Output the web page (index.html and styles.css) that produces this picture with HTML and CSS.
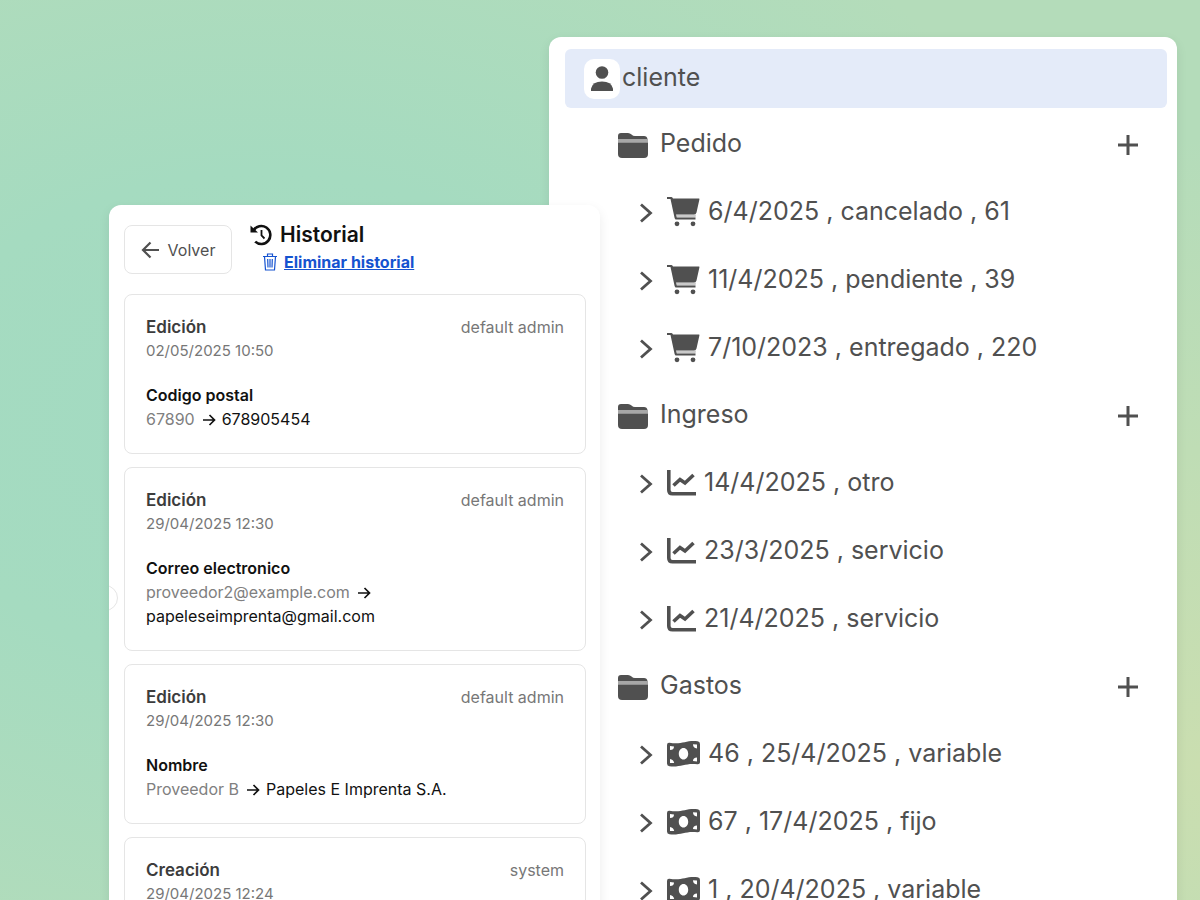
FILE: index.html
```html
<!DOCTYPE html>
<html lang="es">
<head>
    <meta charset="UTF-8">
    <meta name="viewport" content="width=device-width, initial-scale=1.0">
    <title>Historial</title>
    <link rel="stylesheet" href="styles.css">
</head>
<body>

    <!-- shared icons -->
    <svg class="sprite" aria-hidden="true">
        <symbol id="folder" viewBox="0 0 30 26">
            <path d="M0 7V4Q0 1 3 1H10Q12 1 13.500 2.500T17 4H26Q29 4 29.500 7Z"/>
            <path d="M0 7H30V10.500H0Z" opacity=".5"/>
            <path d="M0 10.500H30V22Q30 26 26 26H4Q0 26 0 22Z"/>
        </symbol>
        <symbol id="plus" viewBox="0 0 22 22">
            <path d="M11 1V21M1 11H21" fill="none" stroke="currentColor" stroke-width="3"/>
        </symbol>
        <symbol id="chevron" viewBox="0 0 14 20">
            <path d="M2 1.500L11.500 10L2 18.500" fill="none" stroke="currentColor" stroke-width="2.800"/>
        </symbol>
        <symbol id="cart" viewBox="0 0 33 30">
            <path d="M0 0H4.500Q5.500 0 6 1.500H32Q32.600 1.500 32.400 2.500L29.500 15.500Q29 17.500 27 17.500H9L9.800 20.500H28.500V22.500H9Q8 22.500 7.600 21L3.500 2H0Z"/>
            <path d="M9 17.500H29L28.500 20.500H9.800Z" opacity=".3"/>
            <circle cx="10" cy="26.800" r="2.400"/>
            <circle cx="26" cy="26.800" r="2.400"/>
        </symbol>
        <symbol id="chart" viewBox="0 0 29 26">
            <path d="M1.800 0V20Q1.800 23.800 5.500 23.800H29" fill="none" stroke="currentColor" stroke-width="3.600"/>
            <path d="M6.500 15.500L13 9.500L18 13L26.500 5" fill="none" stroke="currentColor" stroke-width="3.600"/>
        </symbol>
        <symbol id="money" viewBox="0 0 33 26">
            <path fill-rule="evenodd" d="M0 4Q0 1.500 2.500 1.800C15 4 19 -1 30.500 .3Q33 .6 33 3V21Q33 23.500 30.500 23.300C19 21.500 14 26.500 2.500 25.200Q0 25 0 22.500ZM16.500 7C13.800 7 11.800 9.600 11.800 12.800S13.800 18.600 16.500 18.600S21.200 16 21.200 12.800S19.200 7 16.500 7ZM3 5V9Q7 9 7 5.500ZM3 18V22L7.200 22Q6.500 18.500 3 18ZM30 3.500L26 3.300Q26 7 30 7.500ZM30 16.500Q26 16.500 26 20L30 20.500Z"/>
        </symbol>
        <symbol id="arrow" viewBox="0 0 14 14">
            <path d="M1 7H12.500M7.500 2L12.500 7L7.500 12" fill="none" stroke="currentColor" stroke-width="1.700"/>
        </symbol>
    </svg>

    <main class="stage">
        <section class="panel tree">
            <div class="tree-root">
                <span class="avatar">
                    <svg width="22" height="26" viewBox="0 0 22 26"><circle cx="11" cy="6.500" r="6.300"/><path d="M0 25V22.500Q1.500 15.500 11 15.500T22 22.500V25Z"/></svg>
                </span>
                <span class="label">cliente</span>
            </div>

            <div class="group">
                <div class="folder">
                    <svg class="icon-folder"><use href="#folder"/></svg>
                    <span class="label">Pedido</span>
                    <button class="add" aria-label="Agregar pedido"><svg><use href="#plus"/></svg></button>
                </div>
                <ul>
                    <li><button class="toggle" aria-label="Abrir"><svg><use href="#chevron"/></svg></button><svg class="icon-cart"><use href="#cart"/></svg><span class="label">6/4/2025 , cancelado , 61</span></li>
                    <li><button class="toggle" aria-label="Abrir"><svg><use href="#chevron"/></svg></button><svg class="icon-cart"><use href="#cart"/></svg><span class="label">11/4/2025 , pendiente , 39</span></li>
                    <li><button class="toggle" aria-label="Abrir"><svg><use href="#chevron"/></svg></button><svg class="icon-cart"><use href="#cart"/></svg><span class="label">7/10/2023 , entregado , 220</span></li>
                </ul>
            </div>

            <div class="group">
                <div class="folder">
                    <svg class="icon-folder"><use href="#folder"/></svg>
                    <span class="label">Ingreso</span>
                    <button class="add" aria-label="Agregar ingreso"><svg><use href="#plus"/></svg></button>
                </div>
                <ul>
                    <li><button class="toggle" aria-label="Abrir"><svg><use href="#chevron"/></svg></button><svg class="icon-chart"><use href="#chart"/></svg><span class="label">14/4/2025 , otro</span></li>
                    <li><button class="toggle" aria-label="Abrir"><svg><use href="#chevron"/></svg></button><svg class="icon-chart"><use href="#chart"/></svg><span class="label">23/3/2025 , servicio</span></li>
                    <li><button class="toggle" aria-label="Abrir"><svg><use href="#chevron"/></svg></button><svg class="icon-chart"><use href="#chart"/></svg><span class="label">21/4/2025 , servicio</span></li>
                </ul>
            </div>

            <div class="group">
                <div class="folder">
                    <svg class="icon-folder"><use href="#folder"/></svg>
                    <span class="label">Gastos</span>
                    <button class="add" aria-label="Agregar gasto"><svg><use href="#plus"/></svg></button>
                </div>
                <ul>
                    <li><button class="toggle" aria-label="Abrir"><svg><use href="#chevron"/></svg></button><svg class="icon-money"><use href="#money"/></svg><span class="label">46 , 25/4/2025 , variable</span></li>
                    <li><button class="toggle" aria-label="Abrir"><svg><use href="#chevron"/></svg></button><svg class="icon-money"><use href="#money"/></svg><span class="label">67 , 17/4/2025 , fijo</span></li>
                    <li><button class="toggle" aria-label="Abrir"><svg><use href="#chevron"/></svg></button><svg class="icon-money"><use href="#money"/></svg><span class="label">1 , 20/4/2025 , variable</span></li>
                </ul>
            </div>
        </section>

        <section class="panel history">
            <span class="handle"></span>
            <header>
                <button class="back">
                    <svg width="19" height="18" viewBox="0 0 19 18"><path d="M18 9H2M9.500 1.500L2 9L9.500 16.500" fill="none" stroke="currentColor" stroke-width="2.200"/></svg>
                    Volver
                </button>
                <div>
                    <h1>
                        <svg width="22" height="22" viewBox="0 0 22 22"><path d="M3.500 6.500A9 9 0 1 1 5.200 17.600" fill="none" stroke="currentColor" stroke-width="2.600"/><path d="M.5 1.500V8.500H8Z"/><path d="M11.500 6V11.500L14.500 14.500" fill="none" stroke="currentColor" stroke-width="1.800"/></svg>
                        Historial
                    </h1>
                    <a class="delete" href="#">
                        <svg width="14" height="18" viewBox="0 0 14 18"><path d="M0 3.500H14M4.500 3.500V1H9.500V3.500M1.500 3.500L2.500 17H11.500L12.500 3.500M4.700 6L5 14.500M7 6V14.500M9.300 6L9 14.500" fill="none" stroke="currentColor" stroke-width="1.200"/></svg>
                        <span>Eliminar historial</span>
                    </a>
                </div>
            </header>

            <article class="entry">
                <div class="entry-head"><h2>Edición</h2><span class="user">default admin</span></div>
                <time>02/05/2025 10:50</time>
                <h3>Codigo postal</h3>
                <p><span class="old">67890</span> <svg class="arrow"><use href="#arrow"/></svg> 678905454</p>
            </article>

            <article class="entry">
                <div class="entry-head"><h2>Edición</h2><span class="user">default admin</span></div>
                <time>29/04/2025 12:30</time>
                <h3>Correo electronico</h3>
                <p><span class="old">proveedor2@example.com</span> <svg class="arrow"><use href="#arrow"/></svg> papeleseimprenta@gmail.com</p>
            </article>

            <article class="entry">
                <div class="entry-head"><h2>Edición</h2><span class="user">default admin</span></div>
                <time>29/04/2025 12:30</time>
                <h3>Nombre</h3>
                <p><span class="old">Proveedor B</span> <svg class="arrow"><use href="#arrow"/></svg> Papeles E Imprenta S.A.</p>
            </article>

            <article class="entry">
                <div class="entry-head"><h2>Creación</h2><span class="user">system</span></div>
                <time>29/04/2025 12:24</time>
            </article>
        </section>
    </main>

</body>
</html>
```
FILE: styles.css
```css
* {
    box-sizing: border-box;
}

body {
    margin: 0;
    font-family: "Inter", sans-serif;
    color: #111;
}

h1, h2, h3, p, ul {
    margin: 0;
    padding: 0;
}

button {
    font: inherit;
    color: inherit;
    background: none;
    border: none;
    padding: 0;
    cursor: pointer;
}

svg {
    display: block;
    flex: none;
    fill: currentColor;
}

.sprite {
    display: none;
}

/* the two panels share the third column, the history lies on top */
.stage {
    display: grid;
    grid-template-columns: 109fr 440fr 51fr 577fr 23fr;
    height: 100vh;
    overflow: hidden;
    background:
        radial-gradient(ellipse 45% 70% at 100% 85%, #cadeb0 0%, rgba(202, 222, 176, 0) 100%),
        radial-gradient(ellipse 85% 80% at 22% 47%, #a2dac2 0%, #a5dbc0 35%, #b4dcba 85%, #b4dcba 100%);
}

.panel {
    grid-row: 1;
    background: #fff;
    border-radius: 12px 12px 0 0;
    box-shadow: 0 4px 12px rgba(0, 0, 0, 0.08);
}

/* tree */
.tree {
    grid-column: 3 / 5;
    margin-top: 37px;
    padding: 12px 10px 0 16px;
    color: #505050;
    font-size: 25px;
}

.tree .label {
    padding-bottom: 3px;
    white-space: nowrap;
}

.tree-root {
    display: flex;
    align-items: center;
    gap: 2px;
    height: 59px;
    margin-bottom: 3px;
    padding-left: 19px;
    background: #e4ebf9;
    border-radius: 6px;
}

.avatar {
    display: flex;
    align-items: center;
    justify-content: center;
    width: 36px;
    height: 40px;
    background: #fff;
    border-radius: 10px;
}

.folder {
    display: flex;
    align-items: center;
    gap: 12px;
    height: 67px;
    padding: 0 28px 0 53px;
}

.icon-folder {
    width: 30px;
    height: 26px;
}

.add {
    margin-left: auto;
}

.add svg {
    width: 22px;
    height: 22px;
}

.group li {
    display: flex;
    align-items: center;
    gap: 8px;
    height: 68px;
    padding-left: 74px;
}

.toggle {
    margin-right: 6px;
    padding-top: 2px;
}

.toggle svg {
    width: 14px;
    height: 20px;
}

.icon-cart {
    width: 33px;
    height: 30px;
}

.icon-chart {
    width: 29px;
    height: 26px;
}

.icon-money {
    width: 33px;
    height: 26px;
}

/* history */
.history {
    position: relative;
    grid-column: 2 / 4;
    display: flex;
    flex-direction: column;
    gap: 13px;
    margin-top: 205px;
    padding: 20px 14px 0 15px;
    overflow: hidden;
}

.handle {
    position: absolute;
    top: 380px;
    left: -17px;
    width: 26px;
    height: 26px;
    border: 1px solid #e5e5e5;
    border-radius: 50%;
}

.history header {
    display: flex;
    align-items: center;
    gap: 18px;
    height: 49px;
    margin-bottom: 7px;
}

.back {
    display: flex;
    align-items: center;
    justify-content: center;
    gap: 8px;
    width: 108px;
    height: 49px;
    font-size: 16px;
    color: #505050;
    border: 1px solid #e5e5e5;
    border-radius: 8px;
}

h1 {
    display: flex;
    align-items: center;
    gap: 8px;
    font-size: 21px;
    font-weight: 600;
    line-height: 28px;
}

.delete {
    display: flex;
    align-items: center;
    gap: 7px;
    padding: 0 0 4px 13px;
    font-size: 16px;
    font-weight: 700;
    line-height: 26px;
    color: #1553d0;
}

.entry {
    flex: none;
    padding: 20px 21px 22px;
    border: 1px solid #e5e5e5;
    border-radius: 8px;
    font-size: 16px;
    line-height: 24px;
}

.entry-head {
    display: flex;
    justify-content: space-between;
}

h2 {
    font-size: 17px;
    font-weight: 600;
    color: #3c3c3c;
}

.user {
    font-size: 16px;
    color: #777;
}

time {
    display: block;
    font-size: 15px;
    color: #777;
}

h3 {
    margin-top: 20px;
    font-size: 16px;
    font-weight: 600;
}

.entry p {
    max-width: 320px;
}

.old {
    color: #808080;
}

.arrow {
    display: inline-block;
    width: 14px;
    height: 14px;
    margin: 0 1px 0 3px;
    vertical-align: -2px;
}
```
